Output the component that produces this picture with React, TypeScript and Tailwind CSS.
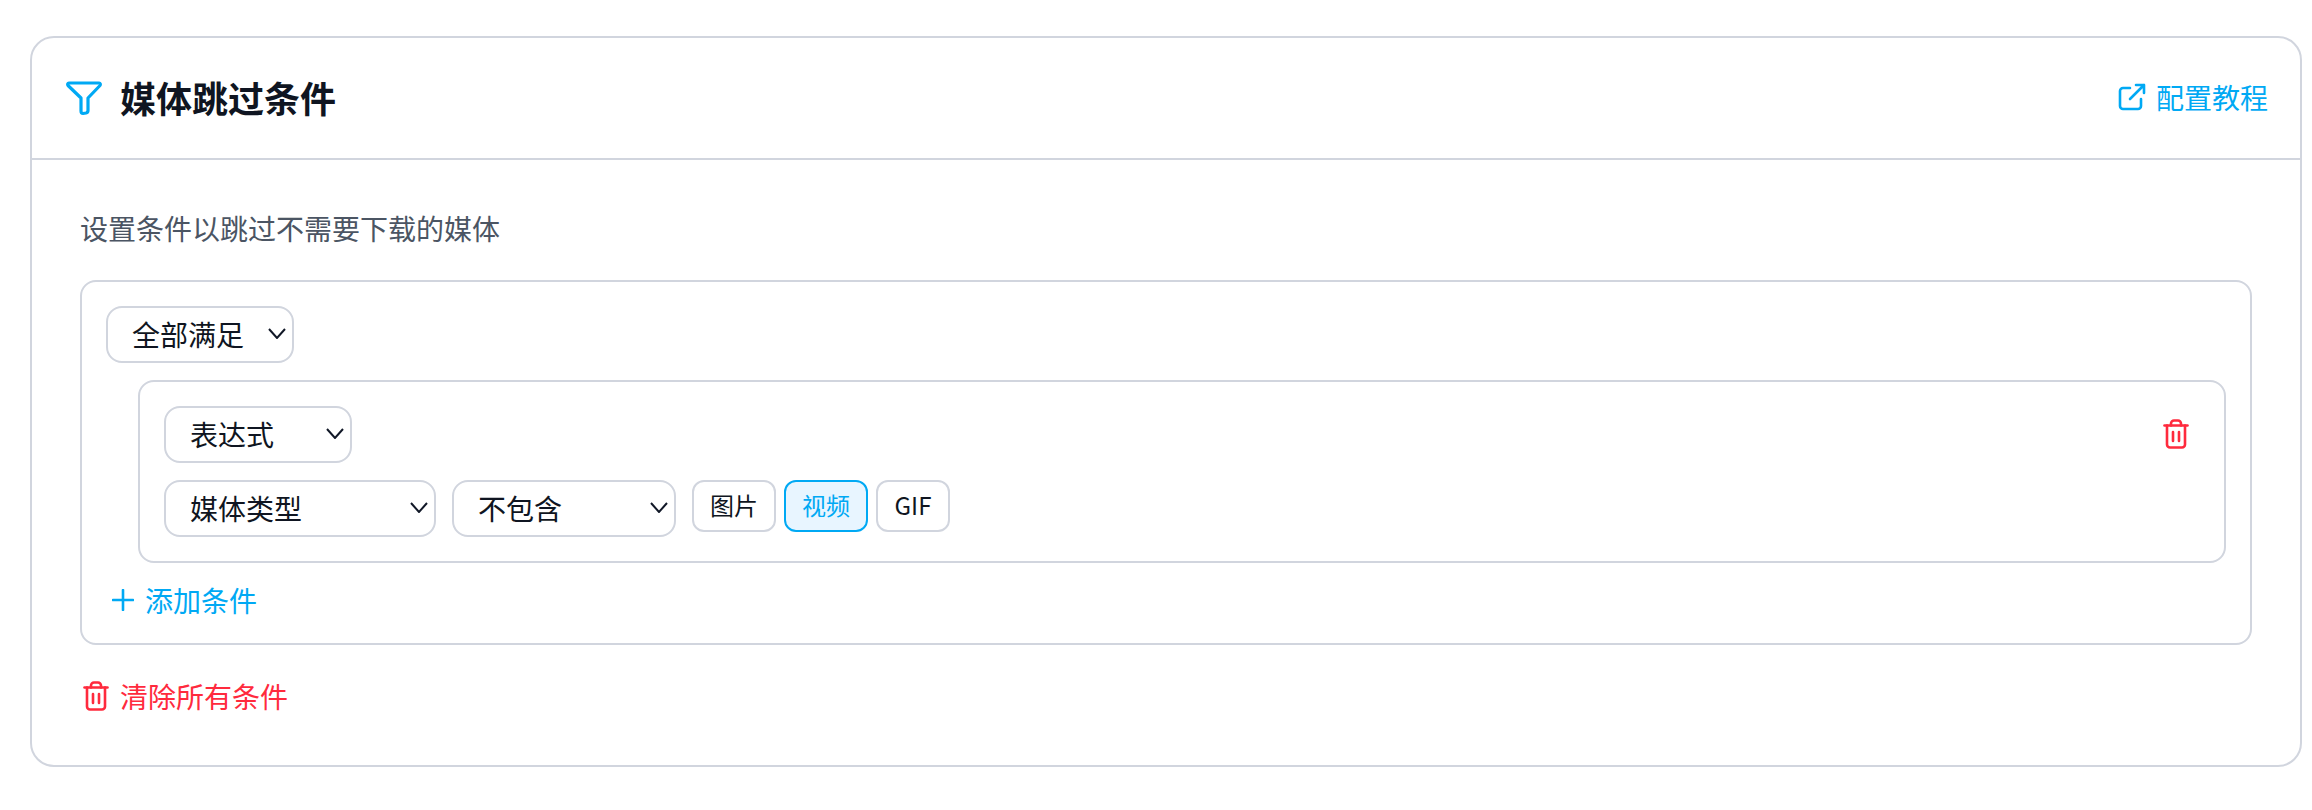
import React from "react";

const FONT = { fontFamily: '"Noto Sans CJK SC", "Noto Sans", sans-serif' };

const TrashIcon = ({ className }: { className?: string }) => (
  <svg viewBox="0 0 26 30" fill="none" stroke="currentColor" strokeWidth="2.6" strokeLinecap="round" strokeLinejoin="round" className={className}>
    <path d="M1.5 6.5h23" />
    <path d="M8 6.5V4.5a3 3 0 0 1 3-3h4a3 3 0 0 1 3 3v2" />
    <path d="M4 6.5v19a3 3 0 0 0 3 3h12a3 3 0 0 0 3-3v-19" />
    <path d="M10 13v9M16 13v9" />
  </svg>
);

const Chevron = () => (
  <svg viewBox="0 0 18 11" fill="none" stroke="#111827" strokeWidth="2" className="h-[11px] w-[18px] shrink-0">
    <path d="M1 1l8 9 8-9" />
  </svg>
);

const FakeSelect = ({ label, width }: { label: string; width: string }) => (
  <div className={`flex h-[57px] items-center justify-between rounded-[16px] border-2 border-[#d1d5de] bg-white pb-[2px] pl-[24px] pr-[6px] text-[28px] text-[#0f1521] ${width}`}>
    <span>{label}</span>
    <Chevron />
  </div>
);

const ToggleButton = ({ label, active, width }: { label: string; active?: boolean; width: string }) => (
  <div
    className={`flex h-[52px] items-center justify-center rounded-[12px] border-2 pb-[2px] text-[24px] ${width} ${
      active ? "border-[#00a9f4] bg-[#e8f5ff] text-[#00a9f4]" : "border-[#d1d5de] bg-white text-[#0f1521]"
    }`}
  >
    {label}
  </div>
);

export default function App() {
  return (
    <div className="min-h-[810px] bg-white pl-[30px] pr-[10px] pt-[36px]" style={FONT}>
      <div className="h-[731px] rounded-[24px] border-2 border-[#d1d5de]">
        {/* header */}
        <div className="flex h-[122px] items-center justify-between border-b-2 border-[#d1d5de] pb-[3px] pl-[33px] pr-[32px]">
          <div className="flex items-center gap-[17px]">
            <svg viewBox="0 0 38 36" fill="none" stroke="#00a9f4" strokeWidth="3.2" strokeLinecap="round" strokeLinejoin="round" className="mt-[3px] h-[36px] w-[38px]">
              <path d="M4 3h30a1.5 1.5 0 0 1 1 2.5L23 18v12.5q0 2-2 2.5l-3 .5q-2 0-2-2.5V18L3 5.5A1.5 1.5 0 0 1 4 3z" />
            </svg>
            <h2 className="text-[36px] font-bold text-[#0f1521]">媒体跳过条件</h2>
          </div>
          <div className="flex items-center gap-[10px] text-[28px] text-[#00a9f4]">
            <svg viewBox="0 0 28 28" fill="none" stroke="currentColor" strokeWidth="2.6" strokeLinecap="round" strokeLinejoin="round" className="h-[28px] w-[28px]">
              <path d="M12 5H5a3 3 0 0 0-3 3v15a3 3 0 0 0 3 3h15a3 3 0 0 0 3-3v-7" />
              <path d="M18 2h8v8M26 2L12 16" />
            </svg>
            <span>配置教程</span>
          </div>
        </div>

        {/* body */}
        <div className="px-[48px] pt-[47px]">
          <p className="text-[28px] leading-[42px] text-[#4b5563]">设置条件以跳过不需要下载的媒体</p>

          <div className="mt-[31px] flex h-[365px] flex-col rounded-[16px] border-2 border-[#d1d5de] pl-[24px] pr-[24px] pt-[24px]">
            <FakeSelect label="全部满足" width="w-[188px]" />

            <div className="ml-[32px] mt-[17px] flex h-[183px] items-start justify-between rounded-[16px] border-2 border-[#d1d5de] pl-[24px] pr-[35px] pt-[24px]">
              <div className="flex flex-col gap-[17px]">
                <FakeSelect label="表达式" width="w-[188px]" />
                <div className="flex items-start gap-[16px]">
                  <FakeSelect label="媒体类型" width="w-[272px]" />
                  <FakeSelect label="不包含" width="w-[224px]" />
                  <div className="flex gap-[8px]">
                    <ToggleButton label="图片" width="w-[84px]" />
                    <ToggleButton label="视频" active width="w-[84px]" />
                    <ToggleButton label="GIF" width="w-[74px]" />
                  </div>
                </div>
              </div>
              <TrashIcon className="mt-[13px] h-[30px] w-[26px] text-[#ff2a3d]" />
            </div>

            <div className="mt-[16px] flex items-center gap-[11px] pl-[6px] text-[28px] text-[#00a9f4]">
              <svg viewBox="0 0 22 22" fill="none" stroke="currentColor" strokeWidth="2.6" strokeLinecap="round" className="h-[22px] w-[22px]">
                <path d="M11 1v20M1 11h20" />
              </svg>
              <span>添加条件</span>
            </div>
          </div>

          <div className="mt-[30px] flex items-center gap-[11px] pl-[3px] text-[28px] text-[#ff2a3d]">
            <TrashIcon className="h-[30px] w-[26px]" />
            <span>清除所有条件</span>
          </div>
        </div>
      </div>
    </div>
  );
}
